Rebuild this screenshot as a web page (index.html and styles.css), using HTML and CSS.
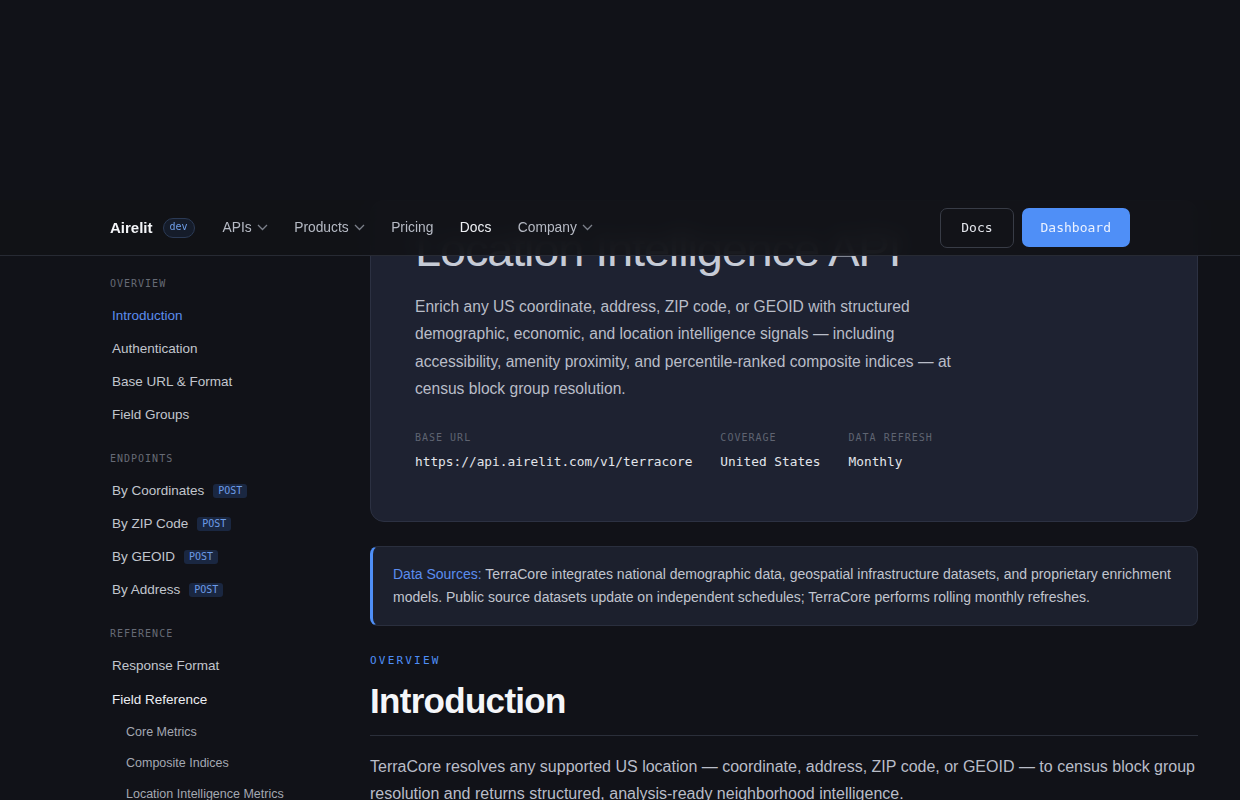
FILE: index.html
```html
<!DOCTYPE html>
<html lang="en">
<head>
    <meta charset="UTF-8">
    <meta name="viewport" content="width=device-width, initial-scale=1.0">
    <title>Airelit TerraCore Docs</title>
    <link rel="stylesheet" href="styles.css">
</head>
<body>

<div class="top-gap"></div>

<div class="viewport">

    <header class="site-header">
        <div class="header-inner">
            <a class="logo" href="#">Airelit</a>
            <span class="env-badge">dev</span>
            <nav class="main-nav">
                <a href="#" class="nav-link">APIs
                    <svg class="chev" width="11" height="7" viewBox="0 0 11 7"><polyline points="1,1 5.5,5.5 10,1" /></svg>
                </a>
                <a href="#" class="nav-link">Products
                    <svg class="chev" width="11" height="7" viewBox="0 0 11 7"><polyline points="1,1 5.5,5.5 10,1" /></svg>
                </a>
                <a href="#" class="nav-link">Pricing</a>
                <a href="#" class="nav-link active">Docs</a>
                <a href="#" class="nav-link">Company
                    <svg class="chev" width="11" height="7" viewBox="0 0 11 7"><polyline points="1,1 5.5,5.5 10,1" /></svg>
                </a>
            </nav>
            <div class="header-actions">
                <a href="#" class="btn btn-outline">Docs</a>
                <a href="#" class="btn btn-primary">Dashboard</a>
            </div>
        </div>
    </header>

    <div class="layout">

        <aside class="sidebar">
            <div class="side-group">
                <div class="side-label">OVERVIEW</div>
                <a href="#" class="side-link active">Introduction</a>
                <a href="#" class="side-link">Authentication</a>
                <a href="#" class="side-link">Base URL &amp; Format</a>
                <a href="#" class="side-link">Field Groups</a>
            </div>

            <div class="side-group">
                <div class="side-label">ENDPOINTS</div>
                <a href="#" class="side-link">By Coordinates <span class="method">POST</span></a>
                <a href="#" class="side-link">By ZIP Code <span class="method">POST</span></a>
                <a href="#" class="side-link">By GEOID <span class="method">POST</span></a>
                <a href="#" class="side-link">By Address <span class="method">POST</span></a>
            </div>

            <div class="side-group">
                <div class="side-label">REFERENCE</div>
                <a href="#" class="side-link">Response Format</a>
                <a href="#" class="side-link bright">Field Reference</a>
                <a href="#" class="side-sublink">Core Metrics</a>
                <a href="#" class="side-sublink">Composite Indices</a>
                <a href="#" class="side-sublink">Location Intelligence Metrics</a>
            </div>
        </aside>

        <main class="content">

            <section class="hero-card">
                <h1 class="hero-title">Location Intelligence API</h1>
                <p class="hero-text">
                    Enrich any US coordinate, address, ZIP code, or GEOID with structured
                    demographic, economic, and location intelligence signals — including
                    accessibility, amenity proximity, and percentile-ranked composite indices — at
                    census block group resolution.
                </p>
                <div class="meta-row">
                    <div class="meta">
                        <div class="meta-label">BASE URL</div>
                        <div class="meta-value">https://api.airelit.com/v1/terracore</div>
                    </div>
                    <div class="meta">
                        <div class="meta-label">COVERAGE</div>
                        <div class="meta-value">United States</div>
                    </div>
                    <div class="meta">
                        <div class="meta-label">DATA REFRESH</div>
                        <div class="meta-value">Monthly</div>
                    </div>
                </div>
            </section>

            <div class="callout">
                <span class="callout-key">Data Sources:</span> TerraCore integrates national demographic data, geospatial infrastructure datasets, and proprietary enrichment models. Public source datasets update on independent schedules; TerraCore performs rolling monthly refreshes.
            </div>

            <section class="doc-section">
                <div class="section-eyebrow">OVERVIEW</div>
                <h2 class="section-title">Introduction</h2>
                <p class="section-text">
                    TerraCore resolves any supported US location — coordinate, address, ZIP code, or GEOID — to census block group
                    resolution and returns structured, analysis-ready neighborhood intelligence.
                </p>
            </section>

        </main>
    </div>
</div>

</body>
</html>
```

FILE: styles.css
```css
body {
    margin: 0;
    background-color: #111218;
    font-family: "Liberation Sans", Arial, sans-serif;
    color: #c4c8d0;
    overflow: hidden;
}

a {
    text-decoration: none;
    color: inherit;
}

.top-gap {
    height: 200px;
}

.viewport {
    position: relative;
    height: calc(100vh - 200px);
    overflow: hidden;
}

/* header sits over the scrolled content */
.site-header {
    position: absolute;
    top: 0;
    left: 0;
    right: 0;
    z-index: 10;
    height: 55px;
    background-color: rgba(17, 18, 23, 0.93);
    backdrop-filter: blur(10px);
    border-bottom: 1px solid #272a33;
}

.header-inner {
    max-width: 1020px;
    height: 100%;
    margin: 0 auto;
    display: flex;
    align-items: center;
}

.logo {
    font-size: 15px;
    font-weight: bold;
    color: #f4f5f8;
}

.env-badge {
    margin-left: 10px;
    height: 20px;
    padding: 0 6px 3px;
    box-sizing: border-box;
    display: flex;
    align-items: center;
    border: 1px solid #2b3a55;
    border-radius: 10px;
    background-color: #151c2a;
    color: #6f9ee8;
    font-family: "DejaVu Sans Mono", monospace;
    font-size: 10px;
}

.main-nav {
    display: flex;
    align-items: center;
    gap: 26.5px;
    margin-left: 28px;
}

.nav-link {
    display: flex;
    align-items: center;
    gap: 5px;
    font-size: 13.8px;
    color: #b6bac4;
}

.nav-link.active {
    color: #eef0f4;
}

.chev polyline {
    fill: none;
    stroke: #7c808a;
    stroke-width: 1.3;
}

.header-actions {
    margin-left: auto;
    display: flex;
    align-items: center;
    gap: 8px;
}

.btn {
    height: 40px;
    padding: 0 20px;
    box-sizing: border-box;
    display: flex;
    align-items: center;
    font-family: "DejaVu Sans Mono", monospace;
    font-size: 13px;
    border-radius: 7px;
}

.btn-outline {
    border: 1px solid #383c46;
    color: #e4e6ec;
}

.btn-primary {
    height: 39px;
    background-color: #4f8ff7;
    color: #eaf1ff;
    padding: 0 19px;
}

/* page columns */
.layout {
    display: flex;
    padding: 0 42px 0 110px;
}

.sidebar {
    flex: 0 0 260px;
    padding-top: 77px;
}

.side-group {
    display: flex;
    flex-direction: column;
    margin-bottom: 21px;
}

.side-label {
    font-family: "DejaVu Sans Mono", monospace;
    font-size: 10px;
    line-height: 14px;
    letter-spacing: 0.1em;
    color: #666a75;
    margin-bottom: 8px;
}

.side-link {
    display: flex;
    align-items: center;
    padding: 8px 2px;
    font-size: 13.5px;
    line-height: 17px;
    color: #c2c6ce;
}

.side-link.active {
    color: #5b8def;
}

.side-link.bright {
    margin: 1px 0;
    color: #eceef3;
}

.side-sublink {
    padding: 8px 16px;
    font-size: 12.5px;
    line-height: 15px;
    color: #a4a8b2;
}

.method {
    margin-left: 9px;
    padding: 0 5px;
    height: 14px;
    display: flex;
    align-items: center;
    border-radius: 3px;
    background-color: #1a2741;
    color: #6d9be6;
    font-family: "DejaVu Sans Mono", monospace;
    font-size: 10px;
}

.content {
    flex: 1;
    min-width: 0;
}

.hero-card {
    background-color: #1e2231;
    border: 1px solid #2c3142;
    border-radius: 14px;
    padding: 23px 44px 50px;
}

.hero-title {
    margin: 0;
    font-size: 47px;
    line-height: 1.1;
    font-weight: normal;
    letter-spacing: -0.025em;
    color: #c6cbd6;
}

.hero-text {
    max-width: 560px;
    margin: 17px 0 0;
    font-size: 15.6px;
    line-height: 27.5px;
    color: #b9bdc8;
}

.meta-row {
    display: flex;
    gap: 28px;
    margin-top: 28px;
}

.meta-label {
    font-family: "DejaVu Sans Mono", monospace;
    font-size: 10px;
    line-height: 14px;
    letter-spacing: 0.1em;
    color: #5f6471;
}

.meta-value {
    margin-top: 8px;
    font-family: "DejaVu Sans Mono", monospace;
    font-size: 12.8px;
    line-height: 18px;
    color: #e2e5eb;
}

.callout {
    margin-top: 24px;
    padding: 16px 20px;
    background-color: #1c202d;
    border: 1px solid #2a2f3e;
    border-left: 3px solid #4f8ff7;
    border-radius: 8px;
    font-size: 14px;
    line-height: 23px;
    color: #c1c5cf;
}

.callout-key {
    color: #5b8def;
}

.doc-section {
    margin-top: 27px;
}

.section-eyebrow {
    font-family: "DejaVu Sans Mono", monospace;
    font-size: 11px;
    line-height: 16px;
    letter-spacing: 0.2em;
    color: #4f8ff7;
}

.section-title {
    margin: 13px 0 0;
    padding-bottom: 15px;
    border-bottom: 1px solid #2b2f3a;
    font-size: 35px;
    line-height: 38px;
    letter-spacing: -0.02em;
    color: #f5f6f9;
}

.section-text {
    margin: 17px 0 0;
    font-size: 16px;
    line-height: 27px;
    color: #b9bdc8;
}
```
